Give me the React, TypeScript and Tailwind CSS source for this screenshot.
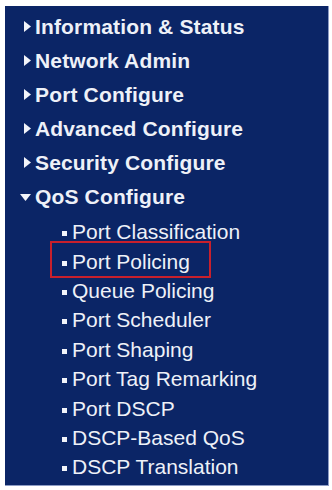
import React from "react";

const mainItems = [
  "Information & Status",
  "Network Admin",
  "Port Configure",
  "Advanced Configure",
  "Security Configure",
];

const qosItems = [
  "Port Classification",
  "Port Policing",
  "Queue Policing",
  "Port Scheduler",
  "Port Shaping",
  "Port Tag Remarking",
  "Port DSCP",
  "DSCP-Based QoS",
  "DSCP Translation",
];

function ArrowRight() {
  return (
    <svg width="8" height="11" viewBox="0 0 8 11" className="shrink-0">
      <polygon points="0,0 7,5.5 0,11" fill="#f2f4fa" />
    </svg>
  );
}

function ArrowDown() {
  return (
    <svg width="12" height="8" viewBox="0 0 12 8" className="shrink-0 mt-[4px]">
      <polygon points="0,0 11,0 5.5,7" fill="#f2f4fa" />
    </svg>
  );
}

export default function App() {
  return (
    <div className="w-[332px] h-[490px] bg-white pt-[6px] pl-[5px]">
      <div
        className="w-[324px] h-[480px] bg-[#0b2566] border-r border-b border-[#8d9cc4] pt-[3px] text-[#eef1f8]"
        style={{ fontFamily: '"Liberation Sans", Arial, sans-serif' }}
      >
        {mainItems.map((label) => (
          <div key={label} className="h-[34px] flex items-center pl-[19px] gap-[3px]">
            <ArrowRight />
            <span className="text-[21px] font-bold leading-none tracking-[0.15px]">{label}</span>
          </div>
        ))}
        <div className="h-[34px] flex items-center pl-[15px] gap-[3px]">
          <ArrowDown />
          <span className="text-[21px] font-bold leading-none tracking-[0.15px]">QoS Configure</span>
        </div>
        <div className="pt-[4px]">
          {qosItems.map((label) => (
            <div key={label} className="relative h-[29.4px] flex items-center pl-[57px] gap-[5px]">
              <span className="w-[5px] h-[5px] bg-[#f2f4fa] mt-[4px] shrink-0" />
              <span className="text-[21px] leading-none">{label}</span>
              {label === "Port Policing" && (
                <span className="absolute left-[45px] top-[-5px] w-[161px] h-[37px] border-2 border-[#c8202c]" />
              )}
            </div>
          ))}
        </div>
      </div>
    </div>
  );
}
